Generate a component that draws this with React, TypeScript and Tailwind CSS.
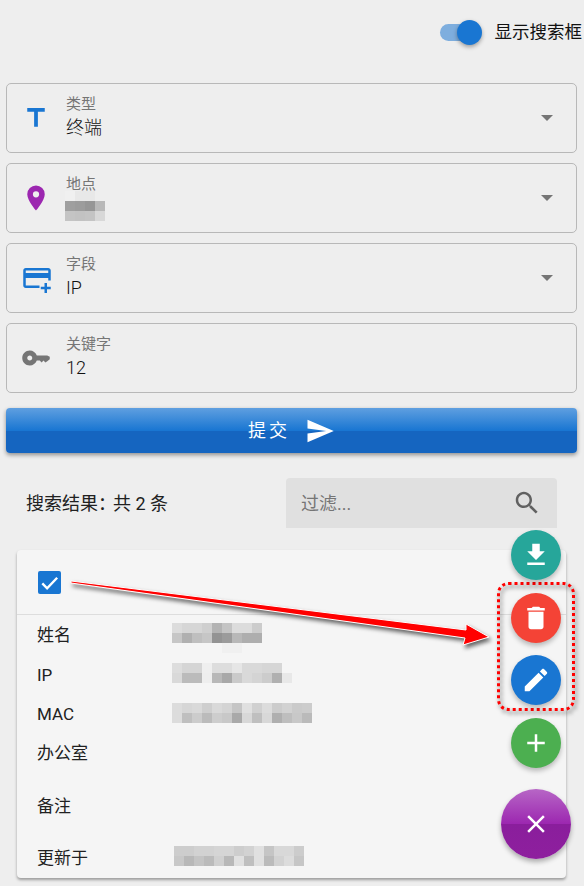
const ICONS = {
  title: "M5,4V7H10.5V19H13.5V7H19V4H5Z",
  pin: "M12,11.5A2.5,2.5 0 0,1 9.5,9A2.5,2.5 0 0,1 12,6.5A2.5,2.5 0 0,1 14.5,9A2.5,2.5 0 0,1 12,11.5M12,2A7,7 0 0,0 5,9C5,14.25 12,22 12,22C12,22 19,14.25 19,9A7,7 0 0,0 12,2Z",
  cardPlus:
    "M21 4H3C1.89 4 1 4.89 1 6V18C1 19.11 1.89 20 3 20H14V18H3V12H21V14H23V6C23 4.89 22.11 4 21 4M21 8H3V6H21V8M20 16V19H23V21H20V24H18V21H15V19H18V16H20Z",
  key: "M7 14C5.9 14 5 13.1 5 12S5.9 10 7 10 9 10.9 9 12 8.1 14 7 14M12.65 10C11.83 7.67 9.61 6 7 6C3.69 6 1 8.69 1 12S3.69 18 7 18C9.61 18 11.83 16.33 12.65 14H15L16.5 15.5L18 14L19.5 15.5L21 14.5L23 13V11L21 10H12.65Z",
  send: "M2,21L23,12L2,3V10L17,12L2,14V21Z",
  search:
    "M15.5 14h-.79l-.28-.27C15.41 12.59 16 11.11 16 9.5 16 5.91 13.09 3 9.5 3S3 5.91 3 9.5 5.91 16 9.5 16c1.61 0 3.09-.59 4.23-1.57l.27.28v.79l5 4.99L20.49 19l-4.99-5zm-6 0C7.01 14 5 11.99 5 9.5S7.01 5 9.5 5 14 7.01 14 9.5 11.99 14 9.5 14z",
  download: "M19 9h-4V3H9v6H5l7 7 7-7zM5 18v2h14v-2H5z",
  trash: "M6 19c0 1.1.9 2 2 2h8c1.1 0 2-.9 2-2V7H6v12zM19 4h-3.5l-1-1h-5l-1 1H5v2h14V4z",
  pencil:
    "M3 17.25V21h3.75L17.81 9.94l-3.75-3.75L3 17.25zM20.71 7.04c.39-.39.39-1.02 0-1.41l-2.34-2.34c-.39-.39-1.02-.39-1.41 0l-1.83 1.83 3.75 3.75 1.83-1.83z",
  plus: "M19 13h-6v6h-2v-6H5v-2h6V5h2v6h6v2z",
  close:
    "M19 6.41L17.59 5 12 10.59 6.41 5 5 6.41 10.59 12 5 17.59 6.41 19 12 13.41 17.59 19 19 17.59 13.41 12z",
};

function Icon({ d, className }: { d: string; className?: string }) {
  return (
    <svg viewBox="0 0 24 24" className={`block h-[30px] w-[30px] fill-current ${className ?? ""}`}>
      <path d={d} />
    </svg>
  );
}

// blurred-out values in the screenshot, one grey per 10px block
function Mosaic({ rows, className }: { rows: string[][]; className?: string }) {
  return (
    <div className={`flex flex-col ${className ?? ""}`}>
      {rows.map((row, i) => (
        <div key={i} className="flex h-[10px]">
          {row.map((c, j) => (
            <div key={j} className="h-[10px] w-[10px]" style={{ backgroundColor: `#${c}${c}${c}` }} />
          ))}
        </div>
      ))}
    </div>
  );
}

function Field({
  icon,
  iconColor,
  label,
  value,
  arrow = true,
  children,
}: {
  icon: string;
  iconColor: string;
  label: string;
  value?: string;
  arrow?: boolean;
  children?: React.ReactNode;
}) {
  return (
    <div className="flex h-[70px] items-center rounded-[5px] border border-[#b8b8b8] pl-[14px] pr-[23px]">
      <Icon d={icon} className={iconColor} />
      <div className="ml-[15px] flex-1 pb-[2px]">
        <div className="text-[15px] leading-[20px] text-[#757575]">{label}</div>
        {value ? (
          <div className="mt-[2px] text-[18px] font-light leading-[24px] text-[#111111]">{value}</div>
        ) : (
          children
        )}
      </div>
      {arrow && (
        <div className="h-0 w-0 border-x-[6px] border-t-[6px] border-x-transparent border-t-[#757575]" />
      )}
    </div>
  );
}

function Row({
  label,
  className,
  children,
}: {
  label: string;
  className: string;
  children?: React.ReactNode;
}) {
  return (
    <div className={`flex items-center pl-[20px] text-[17px] text-[#212121] ${className}`}>
      <div className="w-[135px] shrink-0 pt-[1px]">{label}</div>
      {children}
    </div>
  );
}

function Fab({ d, className }: { d: string; className: string }) {
  return (
    <div
      className={`flex h-[50px] w-[50px] items-center justify-center rounded-full text-white shadow-[0_3px_5px_rgba(0,0,0,0.25)] ${className}`}
    >
      <Icon d={d} />
    </div>
  );
}

export default function App() {
  return (
    <div className="relative h-[886px] w-[584px] overflow-hidden bg-[#eeeeee] font-[Roboto,'Noto_Sans_CJK_SC',sans-serif]">
      <div className="flex h-[83px] items-start justify-end pr-[2px] pt-[20px]">
        <div className="relative mr-[13px] h-[25px] w-[42px]">
          <div className="absolute left-0 top-[4px] h-[17px] w-[40px] rounded-full bg-[#7eaede]" />
          <div className="absolute right-0 top-0 h-[25px] w-[25px] rounded-full bg-[#1976d2] shadow-[0_2px_4px_rgba(0,0,0,0.35)]" />
        </div>
        <span className="text-[17.5px] leading-[25px] text-[#111111]">显示搜索框</span>
      </div>

      <div className="mx-[6px] mr-[7px] flex flex-col gap-[10px]">
        <Field icon={ICONS.title} iconColor="text-[#1976d2]" label="类型" value="终端" />
        <Field icon={ICONS.pin} iconColor="text-[#9c27b0]" label="地点">
          <Mosaic
            className="-ml-[1px] -mt-[3px]"
            rows={[
              ["f0", "e8", "e8", "ee"],
              ["9f", "9c", "96", "b8"],
              ["c4", "c2", "c4", "d8"],
            ]}
          />
        </Field>
        <Field icon={ICONS.cardPlus} iconColor="text-[#1976d2] translate-x-[1px]" label="字段" value="IP" />
        <Field icon={ICONS.key} iconColor="text-[#757575]" label="关键字" value="12" arrow={false} />
      </div>

      <button className="mx-[6px] mt-[15px] flex h-[45px] w-[571px] items-center justify-center gap-[15px] rounded-[4px] bg-[linear-gradient(#5f9fe0_0%,#1976d2_50%,#1565c0_50%,#1565c0_100%)] text-[18px] tracking-[3px] text-white shadow-[0_2px_4px_rgba(0,0,0,0.4)]">
        <span>提交</span>
        <Icon d={ICONS.send} />
      </button>

      <div className="mt-[25px] flex h-[50px] items-center pl-[26px] pr-[27px]">
        <div className="flex-1 text-[18px] text-[#212121]">
          搜索结果<span className="tracking-[-3px]">：</span>共 2 条
        </div>
        <div className="flex h-[50px] w-[271px] items-center justify-between rounded-t-[4px] bg-[#e0e0e0] pl-[15px] pr-[15px]">
          <span className="text-[18px] text-[#757575]">过滤...</span>
          <Icon d={ICONS.search} className="text-[#616161]" />
        </div>
      </div>

      <div className="ml-[17px] mt-[22px] h-[328px] w-[549px] rounded-[4px] bg-[#f5f5f5] shadow-[0_2px_3px_rgba(0,0,0,0.35)]">
        <div className="flex h-[65px] items-center border-b border-[#dddddd] pl-[21px]">
          <div className="flex h-[23px] w-[23px] items-center justify-center rounded-[2px] bg-[#1976d2]">
            <svg viewBox="0 0 24 24" className="h-[23px] w-[23px] fill-none stroke-white stroke-[2.5]">
              <path d="M4.5 13l5 5L20 7" />
            </svg>
          </div>
        </div>
        <Row label="姓名" className="h-[40px]">
          <Mosaic
            className="mt-[8px] self-start"
            rows={[
              ["dc", "d6", "d6", "cf", "b3", "c4", "dc", "dc", "cc"],
              ["c6", "b0", "bf", "c6", "93", "9b", "b8", "ae", "ae"],
              ["f5", "f5", "f5", "f5", "f5", "f0", "f0", "f5", "f5"],
            ]}
          />
        </Row>
        <Row label="IP" className="h-[40px]">
          <Mosaic
            className="mt-[-4px]"
            rows={[
              ["dd", "d5", "d5", "ef", "dd", "dd", "e6", "d9", "d9", "d6", "d6", "f5"],
              ["d9", "bb", "bb", "ee", "b8", "a8", "ca", "d9", "d4", "cc", "b0", "e8"],
            ]}
          />
        </Row>
        <Row label="MAC" className="h-[39px]">
          <Mosaic
            className="mt-[-4px]"
            rows={[
              ["dc", "d6", "d9", "ce", "d9", "d4", "c5", "e0", "d0", "dc", "cc", "d2", "ca", "cc"],
              ["dc", "bf", "cc", "bb", "cd", "c8", "a9", "d8", "bf", "d8", "af", "be", "c8", "ba"],
            ]}
          />
        </Row>
        <Row label="办公室" className="h-[39px]" />
        <Row label="备注" className="h-[67px]" />
        <Row label="更新于" className="h-[36px]">
          <Mosaic
            className="ml-[2px] mt-[-4px]"
            rows={[
              ["cd", "cd", "d2", "d2", "d5", "d5", "cd", "d2", "e0", "c5", "d8", "d8", "cc"],
              ["c8", "b8", "c4", "bb", "d0", "b8", "e0", "bf", "e0", "bb", "d2", "dc", "c6"],
            ]}
          />
        </Row>
      </div>

      <svg
        viewBox="0 0 584 886"
        className="pointer-events-none absolute left-0 top-0 h-[886px] w-[584px] drop-shadow-[2px_3px_2px_rgba(0,0,0,0.6)]"
      >
        <polygon
          points="71,581 466,630 466,624 489,637 463,645 465,638 71,583"
          className="fill-[#ff0000] stroke-white"
          strokeWidth="1"
        />
        <rect
          x="498.5"
          y="583.5"
          width="75"
          height="126"
          rx="10"
          fill="none"
          stroke="#ff0000"
          strokeWidth="3"
          strokeDasharray="3 3"
        />
      </svg>

      <div className="absolute left-[511px] top-[530px] flex flex-col gap-[12.5px]">
        <Fab d={ICONS.download} className="bg-[#26a69a]" />
        <Fab d={ICONS.trash} className="bg-[#f44336]" />
        <Fab d={ICONS.pencil} className="bg-[#1976d2]" />
        <Fab d={ICONS.plus} className="bg-[#4caf50]" />
      </div>
      <div className="absolute left-[501px] top-[789px] flex h-[70px] w-[70px] items-center justify-center rounded-full bg-[linear-gradient(#b766c6_0%,#9c27b0_50%,#8a1e9c_50%,#8e1f9e_100%)] text-white shadow-[0_3px_5px_rgba(0,0,0,0.3)]">
        <Icon d={ICONS.close} />
      </div>
    </div>
  );
}
